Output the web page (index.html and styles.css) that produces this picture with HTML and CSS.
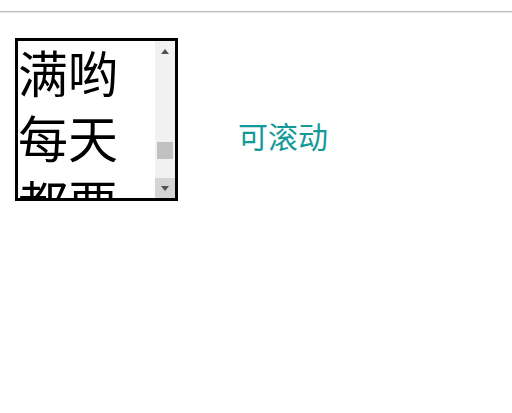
FILE: index.html
```html
<!DOCTYPE html>
<html lang="zh-CN">
<head>
<meta charset="utf-8">
<link rel="stylesheet" href="styles.css">
</head>
<body>
<div class="rule"></div>
<div class="row">
  <div class="box">
    <div class="viewport"><p class="text">满哟每天都要开心快乐</p></div>
    <div class="bar">
      <div class="btn up"><svg width="8" height="5" viewBox="0 0 8 5"><path d="M0 5L4 0L8 5Z" fill="#505050"/></svg></div>
      <div class="track"><div class="thumb"></div></div>
      <div class="btn down"><svg width="8" height="5" viewBox="0 0 8 5"><path d="M0 0L8 0L4 5Z" fill="#505050"/></svg></div>
    </div>
  </div>
  <div class="label">可滚动</div>
</div>
</body>
</html>
```
FILE: styles.css
```css
html, body {
  margin: 0;
  padding: 0;
  background: #fff;
}
body {
  font-family: "Noto Sans CJK SC", "Noto Sans", sans-serif;
}
.rule {
  margin-top: 11px;
  height: 0;
  border-top: 1px solid #bdbdbd;
  border-bottom: 1px solid #e8e8e8;
}
.row {
  display: flex;
  align-items: flex-start;
  padding: 25px 0 0 15px;
}
.box {
  box-sizing: border-box;
  display: flex;
  width: 163px;
  height: 163px;
  border: 3px solid #000;
}
.viewport {
  flex: 1;
  overflow: hidden;
}
.text {
  margin: -2px 0 0;
  font-size: 50px;
  line-height: 65px;
  color: #000;
  word-break: break-all;
}
.bar {
  width: 20px;
  display: flex;
  flex-direction: column;
  background: #f1f1f1;
}
.btn {
  height: 20px;
  display: flex;
  align-items: center;
  justify-content: center;
}
.btn svg {
  display: block;
}
.btn.down {
  background: #d4d4d4;
}
.track {
  flex: 1;
  padding: 81px 2px 0;
}
.thumb {
  height: 17px;
  background: #c1c1c1;
}
.label {
  margin-left: 60px;
  margin-top: 82px;
  font-size: 30px;
  line-height: 1;
  color: #139a98;
}
```
